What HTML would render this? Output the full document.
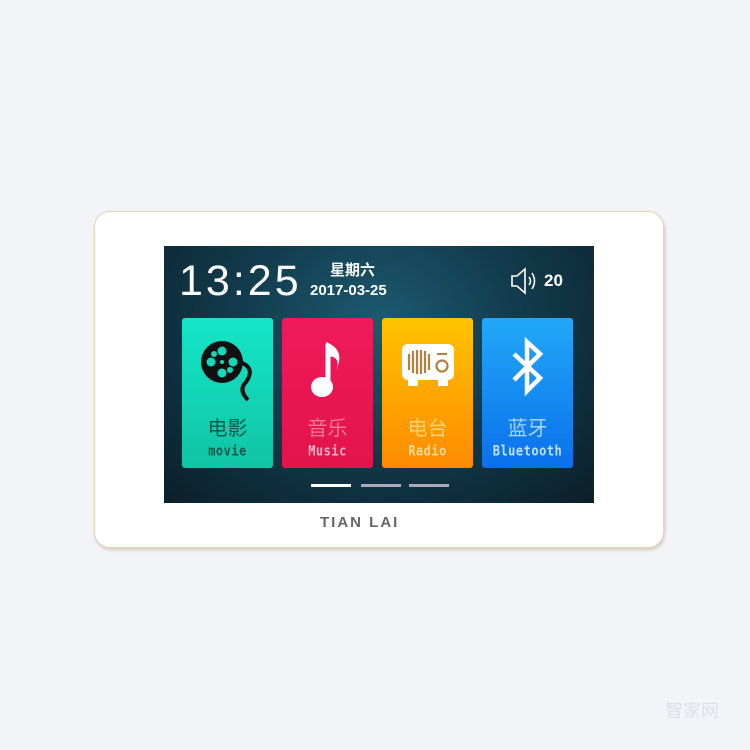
<!DOCTYPE html>
<html><head><meta charset="utf-8"><style>
body{margin:0;width:750px;height:750px;background:#f3f4f8;position:relative;overflow:hidden;font-family:"Liberation Sans","Noto Sans CJK SC",sans-serif}
.panel{position:absolute;left:94px;top:211px;width:570px;height:337px;background:#fff;border-radius:16px;border:1px solid #e6d6b8;box-shadow:1px 2px 3px rgba(150,120,80,.35);box-sizing:border-box}
.screen{position:absolute;left:164px;top:246px;width:430px;height:257px;background:radial-gradient(ellipse at 50% 30%,#1d5a70 0%,#123c4e 45%,#0b1f2a 100%)}
.t{position:absolute;color:#fff}
.tile{position:absolute;top:318px;width:91px;height:150px;border-radius:3px;text-align:center}
.cn{position:absolute;top:100px;width:100%;font-size:20px;line-height:22px}
.en{position:absolute;top:126px;width:100%;font-size:12px;font-weight:bold;font-family:"DejaVu Sans Mono","Liberation Mono",monospace;letter-spacing:0.5px;transform:scaleY(1.15)}
.dot{position:absolute;top:484px;height:3px;width:40px;background:#aab;}
</style></head><body>
<div class="panel"></div>
<div class="screen"></div>
<div class="t" style="left:179px;top:257px;font-size:43px;letter-spacing:3px">13:25</div>
<div class="t" style="left:330px;top:259px;font-size:15px;font-weight:bold">星期六</div>
<div class="t" style="left:310px;top:282px;font-size:15px;font-weight:bold">2017-03-25</div>
<svg style="position:absolute;left:510px;top:266px" width="32" height="30" viewBox="0 0 32 30"><path d="M2 10h5l8-7v24l-8-7H2z" fill="none" stroke="#fff" stroke-width="1.6"/><path d="M19 11q3 4 0 8M22 7q5 8 0 16" fill="none" stroke="#fff" stroke-width="1.6"/></svg>
<div class="t" style="left:544px;top:271px;font-size:17px;font-weight:bold">20</div>

<div class="tile" style="left:182px;background:linear-gradient(#14e6c8,#10c4a4)">
<svg style="position:absolute;left:18px;top:22px" width="66" height="64" viewBox="0 0 66 64"><circle cx="22" cy="22" r="21" fill="#111"/><g fill="#14d8b8"><circle cx="22" cy="11" r="4.5"/><circle cx="22" cy="33" r="4.5"/><circle cx="11" cy="22" r="4.5"/><circle cx="33" cy="22" r="4.5"/><circle cx="14" cy="14" r="3"/><circle cx="30" cy="30" r="3"/><circle cx="22" cy="22" r="2"/></g><path d="M40 22q16 6 6 20q-8 8 2 18" fill="none" stroke="#111" stroke-width="4"/></svg>
<div class="cn" style="color:#0d5a4c">电影</div><div class="en" style="color:#0d5a4c">movie</div></div>

<div class="tile" style="left:282px;background:linear-gradient(#f01a5a,#e3134c)">
<svg style="position:absolute;left:28px;top:22px" width="40" height="64" viewBox="0 0 40 64"><path d="M18 4v40" stroke="#fff" stroke-width="5"/><path d="M16 2q20 8 10 28q6-14-10-14" fill="#fff"/><ellipse cx="12" cy="47" rx="11" ry="10" fill="#fff"/></svg>
<div class="cn" style="color:#f47a9a">音乐</div><div class="en" style="color:#f8b0c4">Music</div></div>

<div class="tile" style="left:382px;background:linear-gradient(#ffc400,#ff8a00)">
<svg style="position:absolute;left:18px;top:22px" width="56" height="50" viewBox="0 0 56 50"><rect x="2" y="4" width="52" height="36" rx="6" fill="#fff"/><g stroke="#b08040" stroke-width="2.2"><path d="M9 14v16M13 11v22M17 10v24M21 10v24M25 11v22M29 14v16"/></g><circle cx="42" cy="26" r="5.5" fill="none" stroke="#b08040" stroke-width="2.2"/><path d="M37 14h10" stroke="#b08040" stroke-width="2"/><rect x="8" y="40" width="10" height="6" fill="#fff"/><rect x="38" y="40" width="10" height="6" fill="#fff"/></svg>
<div class="cn" style="color:#ffd27a">电台</div><div class="en" style="color:#ffd9a0">Radio</div></div>

<div class="tile" style="left:482px;background:linear-gradient(#22a8f8,#0a70ea)">
<svg style="position:absolute;left:28px;top:18px" width="36" height="62" viewBox="0 0 36 62"><path d="M4 18l26 24-13 13V6l13 12L4 44" fill="none" stroke="#fff" stroke-width="4.5"/></svg>
<div class="cn" style="color:#a8d4ff">蓝牙</div><div class="en" style="color:#c0e0ff">Bluetooth</div></div>

<div class="dot" style="left:311px;background:#fff"></div>
<div class="dot" style="left:361px"></div>
<div class="dot" style="left:409px"></div>
<div style="position:absolute;left:320px;top:514px;font-size:15px;letter-spacing:2px;color:#666;font-weight:bold">TIAN LAI</div>
<div style="position:absolute;left:665px;top:697px;font-size:18px;color:#dfe0e6">智家网</div>
</body></html>
